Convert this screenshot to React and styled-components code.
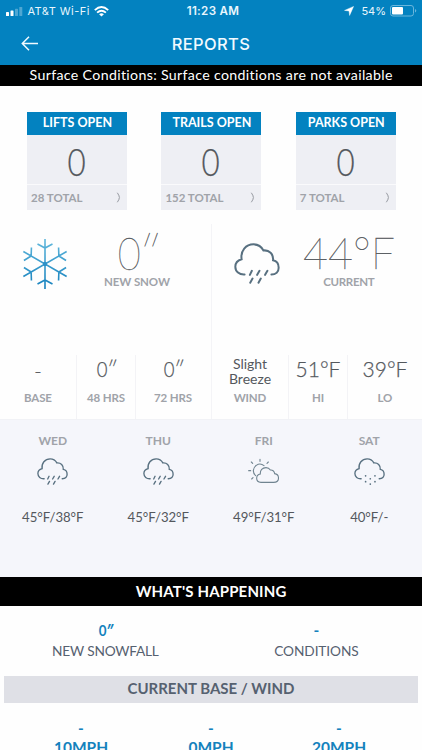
import React from 'react';
import styled, { createGlobalStyle } from 'styled-components';

const GlobalStyle = createGlobalStyle`
  * {
    box-sizing: border-box;
  }
  body {
    margin: 0;
    background: #fff;
    font-family: Lato, "Liberation Sans", sans-serif;
  }
`;

const Screen = styled.div`
  width: 422px;
  height: 750px;
  overflow: hidden;
  background: #fefefe;
`;

const Text = styled.div`
  font-size: ${({ $size }) => $size}px;
  font-weight: ${({ $weight }) => $weight || 400};
  line-height: ${({ $line }) => $line || 16}px;
  letter-spacing: ${({ $track }) => $track || 0}px;
  margin-right: ${({ $track }) => -($track || 0)}px;
  color: ${({ $color }) => $color || '#54585d'};
  text-align: center;
  white-space: nowrap;
`;

const BigText = styled(Text)`
  color: #4a4e52;
  -webkit-text-stroke: 0.35px #5d6165;
`;

const LightText = styled(Text)`
  font-weight: 300;
  -webkit-text-stroke: 0.25px #54585d;
`;

// Lato's zero is wide, so the counters use a narrowed one
const Zero = styled.span`
  display: inline-block;
  transform: scaleX(0.86);
`;

const Inch = styled.span`
  font-style: italic;
  margin-left: ${({ $gap }) => $gap || 0}px;
`;

const StatusBar = styled.div`
  display: grid;
  grid-template-columns: 1fr auto 1fr;
  align-items: center;
  height: 22px;
  padding: 0 5px 0 6px;
  background: #0382c0;
  color: #e9f6fd;
  font-family: Inter, "Liberation Sans", sans-serif;
  font-size: 11px;
  line-height: 22px;
`;

const StatusGroup = styled.div`
  display: flex;
  align-items: center;
  justify-content: ${({ $end }) => ($end ? 'flex-end' : 'flex-start')};
  gap: ${({ $gap }) => $gap}px;
  letter-spacing: ${({ $track }) => $track || 0}px;
`;

const Battery = styled.div`
  display: flex;
  align-items: center;
  gap: 4px;
  margin-left: 3px;
`;

const Clock = styled.div`
  font-weight: 600;
  font-size: 11.6px;
  letter-spacing: 0.3px;
  padding-left: 3px;
`;

const Header = styled.header`
  display: grid;
  grid-template-columns: 60px 1fr 60px;
  align-items: center;
  height: 43px;
  background: #0382c0;

  svg {
    margin-left: 21px;
  }
`;

const Title = styled.h1`
  margin: 0;
  color: #f2faff;
  font-family: Inter, "Liberation Sans", sans-serif;
  font-size: 16.5px;
  font-weight: 500;
  line-height: 42px;
  letter-spacing: 0.35px;
  text-align: center;
`;

const BlackBar = styled.div`
  height: ${({ $height }) => $height}px;
  background: #000;
`;

const Cards = styled.div`
  display: flex;
  gap: 34.4px;
  padding: 26px 26px 0 27px;
  height: 138px;
`;

const Card = styled.div`
  width: 100px;
  height: 98px;
  background: #eeeff4;
`;

const CardHead = styled.div`
  height: 23px;
  padding-left: 1px;
  background: #0382c0;
`;

const CardBody = styled.div`
  height: 50px;
  padding-right: 1px;
  border-bottom: 1px solid #fafafc;
`;

const CardFoot = styled.div`
  display: flex;
  align-items: center;
  justify-content: space-between;
  height: 25px;
  padding: 0 5px 0 4px;
`;

const Halves = styled.div`
  display: grid;
  grid-template-columns: 211px 211px;
  height: 195px;
`;

const Half = styled.section`
  display: flex;
  flex-direction: column;
  justify-content: space-between;
  border-left: ${({ $line }) => ($line ? '1px solid #f4f4f7' : 'none')};
`;

const Summary = styled.div`
  display: grid;
  grid-template-columns: 90px 1fr;

  svg {
    margin: ${({ $icon }) => $icon};
  }
`;

const Reading = styled.div`
  padding-top: 3px;
  width: 94px;
`;

const Stats = styled.div`
  display: grid;
  grid-template-columns: 76px 59px 75px;
  height: 64px;
`;

const Stat = styled.div`
  border-left: ${({ $line }) => ($line ? '1px solid #f3f3f6' : 'none')};
  height: 64px;
`;

const StatValue = styled.div`
  display: flex;
  align-items: center;
  justify-content: center;
  height: 31px;
  padding-bottom: ${({ $lift }) => $lift}px;
`;

const Forecast = styled.section`
  display: grid;
  grid-template-columns: repeat(4, 105.5px);
  height: 158px;
  padding-top: 14px;
  background: #f5f6fb;
  border-top: 1px solid #f1f2f6;
`;

const Day = styled.div`
  display: flex;
  flex-direction: column;
  align-items: center;

  svg {
    margin: 10px 0 24px;
  }
`;

const Row = styled.div`
  display: grid;
  grid-template-columns: ${({ $cols }) => $cols};
  padding-top: ${({ $top }) => $top}px;
`;

const GrayBar = styled.div`
  height: 27px;
  margin: 15px 4px 0;
  background: #dfe0e6;
`;

const blue = '#1482bd';
const slate = '#566170';
const muted = '#a0a3a9';
const iconColor = '#587080';

const CLOUD =
  'M100 164C84 165 72 155 72 141C72 130 80 122 91 119C87 94 104 75 127 75C140 75 151 82 157 93C174 91 188 104 186 122C197 124 203 133 203 144C203 156 194 164 181 164';

const RainIcon = ({ width, height }) => (
  <svg width={width} height={height} viewBox="68 71 139 121" fill="none" stroke={iconColor} strokeWidth="6" strokeLinecap="round" preserveAspectRatio="none">
    <path d={CLOUD} />
    <path d="M122 153L116 165M145 153L138 165M169 153L162 165M124 176L117 188M149 176L142 188" />
  </svg>
);

const SnowIcon = () => (
  <svg width="31" height="27" viewBox="68 71 139 121" fill="none" stroke={iconColor} strokeWidth="6" strokeLinecap="round" preserveAspectRatio="none">
    <path d={CLOUD} />
    <path strokeWidth="7.5" d="M120 151h.1M162 151h.1M141 164h.1M120 177h.1M162 177h.1M141 188h.1" />
  </svg>
);

const PartlyIcon = () => (
  <svg width="31" height="27" viewBox="111 117 93 81" fill="none" stroke="#708490" strokeWidth="3.3" strokeLinecap="round">
    <path d="M150 190H188C197 190 202.500 184 202.500 177C202.500 169 197 165 191 164C190 156 184 152 178 153C175 148 171 146 165 146C154 146 147 154 148 165C141 166 137 171 137 178C137 185 142 190 150 190Z" />
    <path d="M134 170C124 162 125 146 136 139C143 134 153 135 159 140" />
    <path d="M147 121v6M121 129l4 4M172 129l-4 4M113 155h6M122 180l4-4" />
  </svg>
);

const Snowflake = () => (
  <svg width="46" height="52" viewBox="-23 -26 46 52" fill="none" stroke="url(#ice)" strokeWidth="1.6">
    <defs>
      <linearGradient id="ice" gradientUnits="userSpaceOnUse" x1="0" y1="-25" x2="0" y2="25">
        <stop offset="0" stopColor="#62b8dc" />
        <stop offset="1" stopColor="#1480bd" />
      </linearGradient>
    </defs>
    {[0, 60, 120].map((angle) => {
      const r = (angle * Math.PI) / 180;
      const at = (x, y) =>
        `${(x * Math.cos(r) - y * Math.sin(r)).toFixed(2)} ${(x * Math.sin(r) + y * Math.cos(r)).toFixed(2)}`;
      return (
        <path
          key={angle}
          d={`M${at(0.01, -25)}L${at(0, 25)}M${at(-7.5, -20)}L${at(0, -16)}L${at(7.5, -20)}M${at(-7.5, 20)}L${at(0, 16)}L${at(7.5, 20)}`}
        />
      );
    })}
    <circle r="2.2" fill="#2d91c8" stroke="none" />
  </svg>
);

const Chevron = () => (
  <svg width="6" height="11" viewBox="0 0 6 11" fill="none" stroke="#a4a7ad" strokeWidth="1">
    <path d="M1.300 .8Q5.500 5.500 1.300 10.200" />
    <path d="M1.300 .8L3.600 5.500L1.300 10.200" strokeWidth=".4" />
  </svg>
);

const SignalIcon = () => (
  <svg width="17" height="9" viewBox="0 0 17 9" fill="#fff">
    <rect x="0" y="5" width="3" height="4" rx=".6" />
    <rect x="4.500" y="3.500" width="3" height="5.500" rx=".6" />
    <rect x="9" y="1.700" width="3" height="7.300" rx=".6" opacity=".3" />
    <rect x="13.300" y="0" width="3" height="9" rx=".6" opacity=".3" />
  </svg>
);

const WifiIcon = () => (
  <svg width="15" height="11" viewBox="0 0 15 11" fill="none" stroke="#fff" strokeWidth="1.9">
    <path d="M.8 4.100Q7.500-2 14.200 4.100" />
    <path d="M3.100 6.600Q7.500 2.700 11.900 6.600" />
    <path d="M7.500 10.600L5.100 8.200Q7.500 6.300 9.900 8.200Z" fill="#fff" stroke="none" />
  </svg>
);

const LocationIcon = () => (
  <svg width="10" height="10" viewBox="0 0 10 10" fill="#fff">
    <path d="M9.600.4L5.600 9.500L5 5L.5 4.400Z" stroke="#fff" strokeWidth=".4" strokeLinejoin="round" />
  </svg>
);

const BatteryIcon = () => (
  <svg width="27" height="12" viewBox="0 0 27 12" fill="none">
    <rect x=".5" y=".5" width="23" height="10.500" rx="2.500" stroke="#6bb6dc" />
    <rect x="2" y="2" width="11" height="7.500" rx="1" fill="#fff" />
    <path d="M25 4v3.600Q26.300 7 26.300 5.800T25 4Z" fill="#6bb6dc" />
  </svg>
);

const BackIcon = () => (
  <svg width="18" height="15" viewBox="0 0 18 15" fill="none" stroke="#f2faff" strokeWidth="1.5">
    <path d="M17 7.500H1.500M8 .8L1.300 7.500L8 14.200" />
  </svg>
);

const cards = [
  { title: 'LIFTS OPEN', total: '28 TOTAL' },
  { title: 'TRAILS OPEN', total: '152 TOTAL' },
  { title: 'PARKS OPEN', total: '7 TOTAL' },
];

const days = [
  { name: 'WED', temps: '45°F/38°F', icon: <RainIcon width="31" height="27" /> },
  { name: 'THU', temps: '45°F/32°F', icon: <RainIcon width="31" height="27" /> },
  { name: 'FRI', temps: '49°F/31°F', icon: <PartlyIcon /> },
  { name: 'SAT', temps: '40°F/-', icon: <SnowIcon /> },
];

const winds = ['10MPH', '0MPH', '20MPH'];

const Metric = ({ line, label, lift = 4, children }) => (
  <Stat $line={line}>
    <StatValue $lift={lift}>{children}</StatValue>
    <Text $size={11.5} $weight={700} $color={muted} $line={24} $track={-0.15}>{label}</Text>
  </Stat>
);

const App = () => {
  return (
    <Screen>
      <GlobalStyle />
      <StatusBar>
        <StatusGroup $gap={4.5} $track={0.45}>
          <SignalIcon />
          <span>AT&amp;T Wi-Fi</span>
          <WifiIcon />
        </StatusGroup>
        <Clock>11:23 AM</Clock>
        <StatusGroup $end $gap={4}>
          <LocationIcon />
          <Battery>
            54%
            <BatteryIcon />
          </Battery>
        </StatusGroup>
      </StatusBar>
      <Header>
        <BackIcon />
        <Title>REPORTS</Title>
      </Header>
      <BlackBar $height={21}>
        <Text $size={14.2} $line={20} $color="#fff" $track={0.33}>
          Surface Conditions: Surface conditions are not available
        </Text>
      </BlackBar>

      <Cards>
        {cards.map((card) => (
          <Card key={card.title}>
            <CardHead>
              <Text $size={12.5} $weight={700} $line={22} $color="#fff">{card.title}</Text>
            </CardHead>
            <CardBody>
              <LightText $size={36.5} $line={54}><Zero>0</Zero></LightText>
            </CardBody>
            <CardFoot>
              <Text $size={11.5} $weight={700} $color={muted}>{card.total}</Text>
              <Chevron />
            </CardFoot>
          </Card>
        ))}
      </Cards>

      <Halves>
        <Half>
          <Summary $icon="14px 0 0 22px">
            <Snowflake />
            <Reading>
              <BigText $size={46} $weight={100} $line={51}>
                <Zero>0</Zero><Inch $gap={-5}>″</Inch>
              </BigText>
              <Text $size={11.5} $weight={700} $color={muted} $line={7} $track={-0.1}>NEW SNOW</Text>
            </Reading>
          </Summary>
          <Stats>
            <Metric label="BASE" lift={1}><LightText $size={20}>-</LightText></Metric>
            <Metric line label="48 HRS"><LightText $size={21.5}><Zero>0</Zero><Inch $gap={-2}>″</Inch></LightText></Metric>
            <Metric line label="72 HRS"><LightText $size={21.5}><Zero>0</Zero><Inch $gap={-2}>″</Inch></LightText></Metric>
          </Stats>
        </Half>
        <Half $line>
          <Summary $icon="19px 0 0 22px">
            <RainIcon width="46" height="41" />
            <Reading>
              <BigText $size={43} $weight={100} $line={51}>44°F</BigText>
              <Text $size={11.5} $weight={700} $color={muted} $line={7} $track={-0.3}>CURRENT</Text>
            </Reading>
          </Summary>
          <Stats>
            <Metric label="WIND" lift={0}><Text $size={14} $line={15}>Slight<br />Breeze</Text></Metric>
            <Metric line label="HI"><LightText $size={21}>51°F</LightText></Metric>
            <Metric line label="LO"><LightText $size={21}>39°F</LightText></Metric>
          </Stats>
        </Half>
      </Halves>

      <Forecast>
        {days.map((day) => (
          <Day key={day.name}>
            <Text $size={12} $weight={700} $line={14} $color={muted}>{day.name}</Text>
            {day.icon}
            <Text $size={13.2} $line={16} $track={-0.05}>{day.temps}</Text>
          </Day>
        ))}
      </Forecast>

      <BlackBar $height={29}>
        <Text $size={15} $weight={700} $line={28} $color="#fff" $track={0.15}>WHAT'S HAPPENING</Text>
      </BlackBar>
      <Row $cols="211px 211px" $top={14}>
        <div>
          <Text $size={15.5} $weight={700} $line={20} $color={blue}><Zero>0</Zero><Inch $gap={-1}>″</Inch></Text>
          <Text $size={13.7} $line={21} $color={slate} $track={-0.2}>NEW SNOWFALL</Text>
        </div>
        <div>
          <Text $size={15.5} $weight={700} $line={20} $color={blue}>-</Text>
          <Text $size={13.7} $line={21} $color={slate} $track={-0.1}>CONDITIONS</Text>
        </div>
      </Row>
      <GrayBar>
        <Text $size={15} $weight={700} $line={25} $color={slate}>CURRENT BASE / WIND</Text>
      </GrayBar>
      <Row $cols="162px 98px 158px" $top={17}>
        {winds.map((wind) => (
          <div key={wind}>
            <Text $size={15.5} $weight={700} $line={17} $color={blue}>-</Text>
            <Text $size={15.5} $weight={700} $line={20} $color={blue}>{wind}</Text>
          </div>
        ))}
      </Row>
    </Screen>
  );
};

export default App;
